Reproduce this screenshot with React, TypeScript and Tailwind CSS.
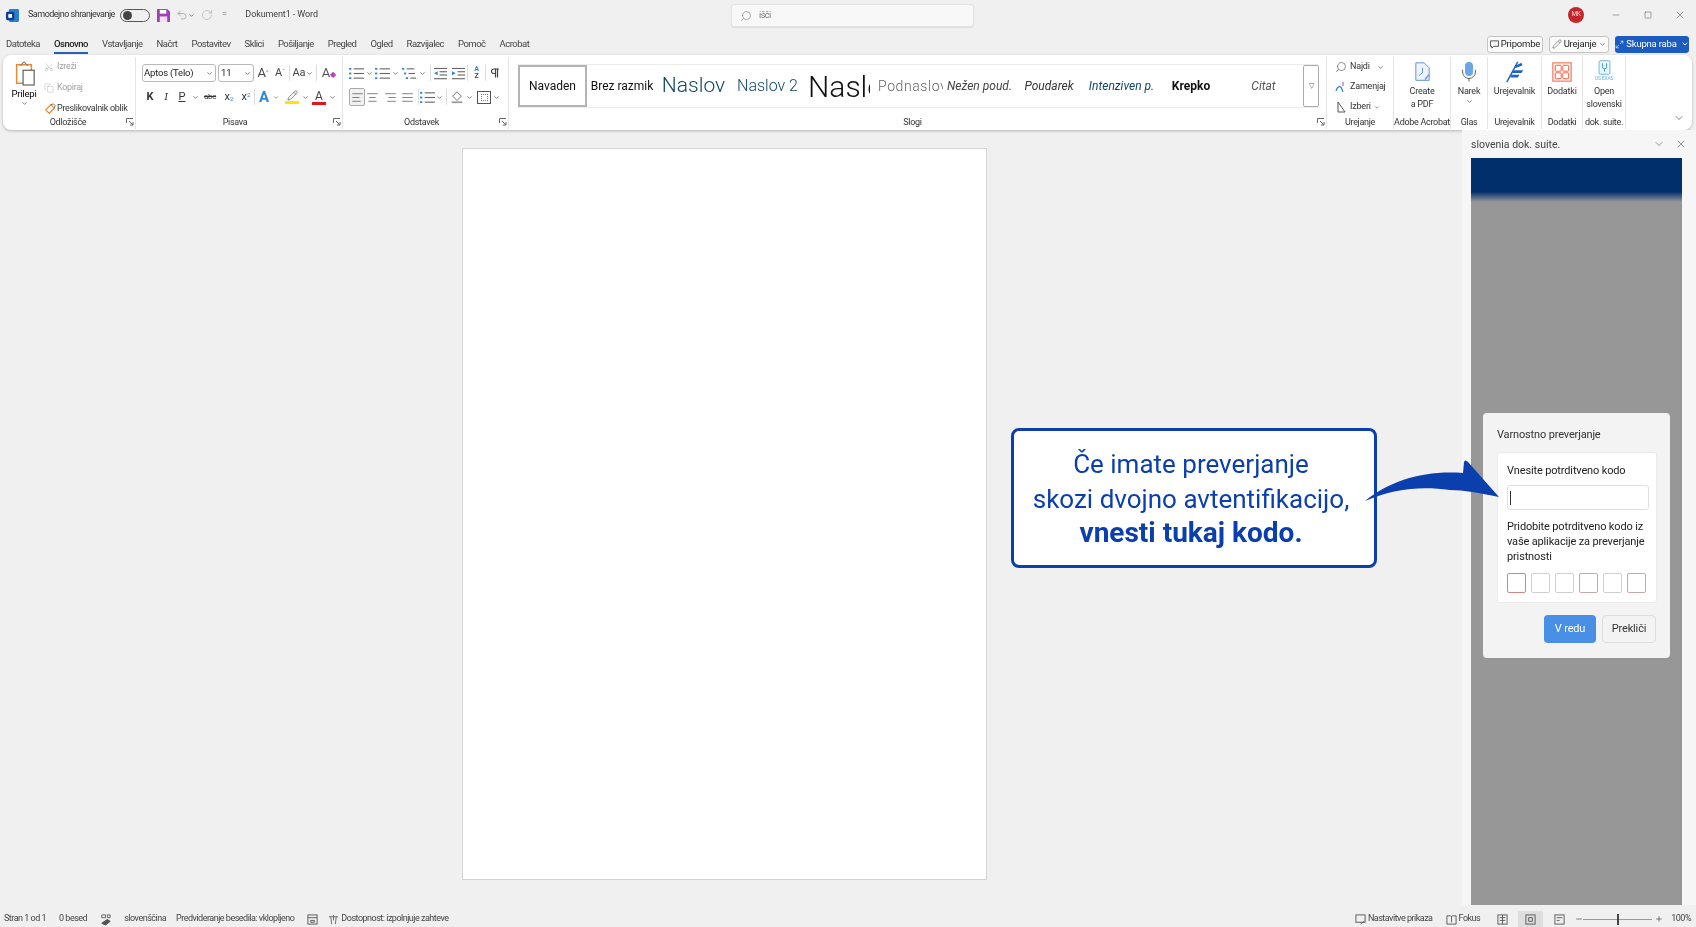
import type { ReactNode } from "react"
import {
  AlignCenter, AlignJustify, AlignLeft, AlignRight, ChevronDown, Copy, Maximize2, Mic, Minus, Pencil, Pilcrow,
  Plus, RotateCw, Scissors, Search, Square, Undo2, X,
} from "lucide-react"

const Chev = ({ w = 10 }: { w?: number }) => (
  <span className="flex shrink-0 items-center justify-center" style={{ width: w }}>
    <ChevronDown className="h-[7px] w-[7px] text-[#555]" strokeWidth={2.5} />
  </span>
)

const Launcher = () => (
  <svg viewBox="0 0 8 8" className="absolute bottom-[3px] right-[1px] h-2 w-2 text-[#666]" fill="none" stroke="currentColor">
    <path d="M.5 5V.5H7M3 3l4 4M7 4v3H4" />
  </svg>
)

const Sep = ({ className = "" }: { className?: string }) => <div className={`w-px h-4 shrink-0 bg-[#dcdcdc] ${className}`} />

function Group({ w, label, launcher, labelClass = "", children }: { w: number; label: string; launcher?: boolean; labelClass?: string; children: ReactNode }) {
  return (
    <div className="relative h-full shrink-0 border-r border-[#e4e4e4] flex flex-col" style={{ width: w }}>
      <div className="h-[59px] overflow-hidden">{children}</div>
      <div className={`text-[9px] tracking-[-0.3px] whitespace-nowrap leading-[13px] text-center text-[#333] ${labelClass}`}>{label}</div>
      {launcher && <Launcher />}
    </div>
  )
}

const ListIcon = ({ lines = 3, indent = false }: { lines?: number; indent?: boolean }) => (
  <svg viewBox="0 0 16 14" className="h-[13px] w-[15px] shrink-0">
    {[...Array(lines)].map((_, i) => (
      <g key={i}>
        <rect x={indent ? i * 2 : 0} y={1 + i * 5} width="2.4" height="2" fill="#2f86d6" />
        <rect x={(indent ? i * 2 : 0) + 5} y={1.4 + i * 5} width={indent ? 8 - i : 11} height="1.2" fill="#666" />
      </g>
    ))}
  </svg>
)

const IndentIcon = ({ flip = false }: { flip?: boolean }) => (
  <svg viewBox="0 0 16 14" className="h-[13px] w-[15px]">
    <rect x="1" y="1" width="14" height="1.2" fill="#666" />
    <rect x="7" y="4.5" width="8" height="1.2" fill="#666" />
    <rect x="7" y="8" width="8" height="1.2" fill="#666" />
    <rect x="1" y="12" width="14" height="1.2" fill="#666" />
    <path d={flip ? "M5 4.5v4.5L1 6.8z" : "M1 4.5v4.5l4-2.2z"} fill="#2f86d6" />
  </svg>
)

const Swatch = ({ color, children, className = "" }: { color: string; children: ReactNode; className?: string }) => (
  <span className={`flex flex-col items-center w-[16px] shrink-0 ${className}`}>
    {children}
    <span className="h-[3px] w-[14px]" style={{ background: color }} />
  </span>
)

function ClipboardGroup() {
  return (
    <div className="flex h-full">
      <div className="w-[38px] ml-[2px] flex flex-col items-center pt-[3px]">
        <svg viewBox="0 0 26 28" className="h-[26px] w-[24px]" fill="none">
          <path d="M5 5h16v20H5z" stroke="#e98b2a" strokeWidth="1.6" />
          <path d="M9 6l4-4 4 4" stroke="#777" strokeWidth="1.2" />
          <rect x="12" y="11" width="12" height="16" fill="#fff" stroke="#555" strokeWidth="1.2" />
        </svg>
        <div className="text-[9.5px] tracking-[-0.2px] leading-[12px] mt-[2px]">Prilepi</div>
        <Chev />
      </div>
      <div className="ml-[1px] pt-[1px] flex flex-col gap-[4px] text-[9px] tracking-[-0.3px] leading-[17px] whitespace-nowrap">
        <div className="flex items-center gap-[3px] text-[#a2a2a2]"><Scissors className="h-[10px] w-[10px] -rotate-90" strokeWidth={1} />Izreži</div>
        <div className="flex items-center gap-[3px] text-[#a2a2a2]"><Copy className="h-[10px] w-[10px]" strokeWidth={1} />Kopiraj</div>
        <div className="flex items-center gap-[1px] text-[#333]">
          <svg viewBox="0 0 14 14" className="h-[12px] w-[12px]" fill="none"><path d="M2 8l6-6 4 4-6 6z" stroke="#e98b2a" strokeWidth="1.4" /><path d="M8 2l3-1 2 2-1 3" stroke="#666" /></svg>
          Preslikovalnik oblik
        </div>
      </div>
    </div>
  )
}

function FontGroup() {
  return (
    <div className="pl-[6px] pt-[7px]">
      <div className="flex items-center h-[18px]">
        <div className="flex shrink-0 items-center justify-between w-[74px] h-[18px] border border-[#b9b9b9] rounded-[3px] pl-[1px] pr-[1px] text-[9.5px] tracking-[-0.2px] text-[#222]">Aptos (Telo)<Chev /></div>
        <div className="flex shrink-0 items-center justify-between ml-[2px] w-[36px] h-[18px] border border-[#b9b9b9] rounded-[3px] pl-[2px] pr-[1px] text-[9.5px] text-[#222]">11<Chev /></div>
        <span className="shrink-0 w-[18px] text-[13px] text-center text-[#444]">A<sup className="text-[6px] text-[#2f86d6]">^</sup></span>
        <span className="shrink-0 w-[16px] text-[11px] text-center text-[#444]">A<sup className="text-[6px] text-[#2f86d6]">ˇ</sup></span>
        <Sep className="mx-[1px]" />
        <span className="flex shrink-0 items-center justify-center w-[24px] text-[11px] text-[#444]">Aa<Chev w={8} /></span>
        <Sep className="mx-[1px]" />
        <span className="shrink-0 w-[22px] text-[13px] text-center text-[#555]">A<span className="text-[#c040c0] text-[8px]">◆</span></span>
      </div>
      <div className="flex items-center h-[18px] mt-[6px] text-[#333] text-[11px]">
        <span className="shrink-0 w-[16px] text-center font-bold">K</span>
        <span className="shrink-0 w-[16px] text-center italic font-serif">I</span>
        <span className="shrink-0 w-[16px] text-center underline">P</span>
        <Chev />
        <span className="shrink-0 w-[20px] text-center text-[8px] tracking-[-0.3px] line-through">abc</span>
        <span className="shrink-0 w-[18px] text-center">x<sub className="text-[6px] text-[#2f86d6]">2</sub></span>
        <span className="shrink-0 w-[16px] text-center">x<sup className="text-[6px] text-[#2f86d6]">2</sup></span>
        <Sep />
        <span className="shrink-0 w-[18px] text-center text-[15px] font-bold text-[#2f86d6]">A</span>
        <Chev w={6} />
        <Swatch color="#ffe600" className="ml-[5px]"><Pencil className="h-[11px] w-[11px] text-[#555]" strokeWidth={1.5} /></Swatch>
        <Chev />
        <Swatch color="#e8141c" className="ml-[1px]"><span className="text-[12px] leading-[12px] text-[#444]">A</span></Swatch>
        <Chev />
      </div>
    </div>
  )
}

function ParagraphGroup() {
  const align = "h-[13px] w-[15px] shrink-0 text-[#666]"
  return (
    <div className="pl-[6px] pt-[7px]">
      <div className="flex items-center h-[18px]">
        <ListIcon /><Chev />
        <span className="w-[1px] shrink-0" />
        <ListIcon /><Chev />
        <span className="w-[2px] shrink-0" />
        <ListIcon indent /><Chev />
        <Sep className="ml-[3px]" />
        <span className="shrink-0 w-[18px] flex justify-center"><IndentIcon flip /></span>
        <span className="shrink-0 w-[18px] flex justify-center"><IndentIcon /></span>
        <Sep />
        <span className="shrink-0 w-[17px] flex flex-col items-center text-[7px] leading-[7px] font-bold text-[#2f86d6]">A<span className="text-[#444]">Z</span></span>
        <Sep />
        <Pilcrow className="h-3 w-[18px] shrink-0 text-[#444]" strokeWidth={2.4} />
      </div>
      <div className="flex items-center h-[18px] mt-[6px]">
        <span className="flex shrink-0 items-center justify-center w-[16px] h-[18px] border border-[#aaa] rounded-[2px] bg-[#f1f1f1]"><AlignLeft className={align} strokeWidth={1.5} /></span>
        <AlignCenter className={align} strokeWidth={1.5} />
        <AlignRight className={`${align} ml-[3px]`} strokeWidth={1.5} />
        <AlignJustify className={`${align} ml-[2px]`} strokeWidth={1.5} />
        <Sep className="ml-[3px]" />
        <span className="ml-[1px]"><ListIcon /></span><Chev w={8} />
        <Sep className="ml-[3px]" />
        <svg viewBox="0 0 16 16" className="ml-[3px] h-[14px] w-[14px] shrink-0" fill="none"><path d="M8 2l5 5-5 5-5-5z" stroke="#666" /><path d="M2 14h12" stroke="#999" strokeWidth="2" /></svg>
        <Chev />
        <span className="ml-[3px] flex shrink-0 h-[13px] w-[14px] items-center justify-center border border-[#555] text-[#999]"><span className="h-[7px] w-[7px] border border-dotted border-[#777]" /></span>
        <Chev />
      </div>
    </div>
  )
}

function StylesGroup() {
  const cell = "shrink-0 flex items-center overflow-hidden whitespace-nowrap h-full"
  return (
    <div className="pl-[9px] pt-[7px] h-full">
      <div className="flex h-[44px] w-[801px] border-y border-[#ececec]">
        <div className={`${cell} w-[69px] justify-center border-2 border-[#b4b4b4] text-[12px] text-[#111]`}>Navaden</div>
        <div className={`${cell} w-[70px] justify-center text-[12px] text-[#111]`}>Brez razmik</div>
        <div className={`${cell} w-[73px] justify-center text-[21px] font-light text-[#0f4761]`}>Naslov</div>
        <div className={`${cell} w-[75px] justify-center text-[16px] font-light text-[#0f4761]`}>Naslov 2</div>
        <div className={`${cell} w-[65px] pl-[3px] text-[30px] font-light text-[#111]`}>Naslov</div>
        <div className={`${cell} w-[73px] pl-[8px] pr-[7px] text-[14px] tracking-[0.6px] font-light text-[#666]`}>Podnaslov</div>
        <div className={`${cell} w-[73px] justify-center text-[12px] italic text-[#444]`}>Nežen poud.</div>
        <div className={`${cell} w-[66px] justify-center text-[12px] italic text-[#333]`}>Poudarek</div>
        <div className={`${cell} w-[79px] justify-center text-[12px] italic text-[#0f4761]`}>Intenziven p.</div>
        <div className={`${cell} w-[60px] justify-center text-[12px] font-bold text-[#111]`}>Krepko</div>
        <div className={`${cell} w-[82px] justify-center pl-[3px] text-[12px] italic text-[#555]`}>Citat</div>
        <div className={`${cell} w-[16px] justify-center border border-[#aaa] rounded-[2px] text-[#555] text-[7px]`}>▽</div>
      </div>
    </div>
  )
}

function EditGroup() {
  const row = "flex items-center gap-[3px] h-[18px] text-[9px] tracking-[-0.2px] text-[#333]"
  return (
    <div className="pl-[8px] pt-[1px] flex flex-col gap-[2px]">
      <div className={row}><Search className="h-3 w-3 -scale-x-100 text-[#555]" strokeWidth={1.3} />Najdi<Chev w={16} /></div>
      <div className={row}>
        <svg viewBox="0 0 12 12" className="h-3 w-3" fill="none"><path d="M8 1v4" stroke="#b03ad0" /><path d="M1 10c1-4 3-5 5-4l2 5" stroke="#2f86d6" strokeWidth="1.3" /></svg>
        Zamenjaj
      </div>
      <div className={row}>
        <svg viewBox="0 0 12 12" className="h-3 w-3" fill="none"><path d="M3 1l7 10H3z" stroke="#555" /></svg>
        Izberi<Chev w={6} />
      </div>
    </div>
  )
}

const BigBtn = ({ icon, children }: { icon: ReactNode; children: ReactNode }) => (
  <div className="flex flex-col items-center pt-[4px] text-[9px] tracking-[-0.2px] whitespace-nowrap leading-[13px] text-[#333] text-center">
    <div className="h-[22px] flex items-center justify-center mb-[2px]">{icon}</div>
    {children}
  </div>
)

function Ribbon() {
  return (
    <div className="mx-[3px] h-[75px] w-[1689px] shrink-0 bg-white rounded-lg shadow-[0_1px_3px_rgba(0,0,0,0.25)] flex relative pt-[2px] pb-[1px]">
      <Group w={133} label="Odložišče" launcher labelClass="pr-[2px]"><ClipboardGroup /></Group>
      <Group w={207} label="Pisava" launcher labelClass="pr-[8px]"><FontGroup /></Group>
      <Group w={166} label="Odstavek" launcher labelClass="pr-[8px]"><ParagraphGroup /></Group>
      <Group w={818} label="Slogi" launcher labelClass="pr-[10px]"><StylesGroup /></Group>
      <Group w={67} label="Urejanje"><EditGroup /></Group>
      <Group w={57} label="Adobe Acrobat">
        <BigBtn icon={
          <svg viewBox="0 0 20 24" className="h-[20px] w-[17px]" fill="none" stroke="#5a8ad8" strokeWidth="1.1"><path d="M2 1h10l6 6v15H2z" fill="#eef4fd" /><path d="M10 7v6l-4 3" /><path d="M13 21l5-6" stroke="#7c9fdd" strokeWidth="2.2" /></svg>
        }>Create<br />a PDF</BigBtn>
      </Group>
      <Group w={37} label="Glas">
        <BigBtn icon={<div className="relative flex justify-center"><Mic className="h-[22px] w-[22px] text-[#555]" strokeWidth={1} /><span className="absolute top-[1px] h-[14px] w-[8px] rounded-full bg-[#6aa6e8]" /></div>}>Narek<Chev /></BigBtn>
      </Group>
      <Group w={54} label="Urejevalnik">
        <BigBtn icon={
          <svg viewBox="0 0 24 24" className="h-[22px] w-[22px]" fill="none"><path d="M15 1L3 23" stroke="#1f62c8" strokeWidth="1.6" /><path d="M13 5l6-3 1 3-8 3zM10 10h11l-2 3H9zM8 15h9l-2 3H7z" fill="#1f62c8" /></svg>
        }>Urejevalnik</BigBtn>
      </Group>
      <Group w={41} label="Dodatki">
        <BigBtn icon={
          <svg viewBox="0 0 24 24" className="h-[22px] w-[20px]" fill="none" stroke="#ef6a50" strokeWidth="1.2"><rect x="1" y="1" width="22" height="22" fill="#fdece7" /><rect x="4" y="4" width="7" height="7" rx="1" fill="#fff" /><rect x="13" y="4" width="7" height="7" rx="1" fill="#fff" /><rect x="4" y="13" width="7" height="7" rx="1" fill="#fff" /><rect x="13" y="13" width="7" height="7" rx="1" fill="#fff" /></svg>
        }>Dodatki</BigBtn>
      </Group>
      <Group w={43} label="dok. suite.">
        <div className="flex flex-col items-center pt-[3px] text-[9px] tracking-[-0.2px] leading-[13px] text-[#333]">
          <svg viewBox="0 0 18 22" className="h-[15px] w-[13px]" fill="none" stroke="#3f9bd6"><rect x="1" y="1" width="16" height="20" rx="2" fill="#eaf5fc" /><path d="M6 5v5a3 3 0 006 0V5M9 13v4" strokeWidth="1.4" /></svg>
          <div className="text-[5px] leading-[7px] text-[#6ab2e4] mb-[3px]">OS EXAS</div>
          <div>Open</div>
          <div>slovenski</div>
        </div>
      </Group>
      <ChevronDown className="absolute right-[7px] bottom-[6px] h-3 w-3 text-[#555]" strokeWidth={1.5} />
    </div>
  )
}

function TitleBar() {
  return (
    <div className="h-[30px] shrink-0 flex items-center relative text-[9px] tracking-[-0.5px] text-[#333]">
      <svg viewBox="0 0 14 14" className="ml-[6px] h-[13px] w-[13px]"><rect x="3" y="0" width="11" height="14" rx="1.5" fill="#2b7cd3" /><rect x="0" y="3" width="9" height="9" rx="1.5" fill="#103f91" /><rect x="2.5" y="5.5" width="4" height="4" fill="#fff" /></svg>
      <span className="ml-[9px]">Samodejno shranjevanje</span>
      <span className="ml-[5px] flex items-center h-[13px] w-[30px] rounded-full border border-[#555] pl-[2px]"><span className="h-[9px] w-[9px] rounded-full bg-[#444]" /></span>
      <svg viewBox="0 0 14 14" className="ml-[7px] h-[13px] w-[13px]"><path d="M0 0h11l3 3v11H0z" fill="#a23fb5" /><rect x="3" y="1" width="7" height="4" fill="#fff" /><rect x="3" y="8" width="8" height="6" fill="#f3dff7" /></svg>
      <Undo2 className="ml-[6px] h-3 w-3 text-[#888]" strokeWidth={1.2} />
      <Chev w={8} />
      <RotateCw className="ml-[5px] h-3 w-3 text-[#aaa]" strokeWidth={1.2} />
      <span className="ml-[9px] text-[#666]">=</span>
      <span className="ml-[19px] text-[#444] tracking-[-0.1px]">Dokument1 - Word</span>

      <div className="absolute left-[731px] top-[4px] h-[23px] w-[243px] bg-[#f8f8f8] border border-[#e2e2e2] rounded-[3px] shadow-[0_1px_1px_rgba(0,0,0,0.08)] flex items-center pl-[8px] gap-[7px] text-[#777]">
        <Search className="h-3 w-3 -scale-x-100" strokeWidth={1.2} />išči
      </div>

      <div className="ml-auto flex items-center">
        <span className="h-[16px] w-[16px] rounded-full bg-[#c4262e] text-[6.5px] text-white/80 flex items-center justify-center">MK</span>
        <span className="ml-[16px] w-[32px] flex justify-center"><Minus className="h-2.5 w-2.5 text-[#555]" strokeWidth={1.2} /></span>
        <span className="w-[32px] flex justify-center"><Square className="h-2 w-2 text-[#555]" strokeWidth={1.5} /></span>
        <span className="w-[32px] flex justify-center"><X className="h-3 w-3 text-[#555]" strokeWidth={1.1} /></span>
      </div>
    </div>
  )
}

function TabsRow() {
  const tabs = ["Vstavljanje", "Načrt", "Postavitev", "Sklici", "Pošiljanje", "Pregled", "Ogled", "Razvijalec", "Pomoč", "Acrobat"]
  return (
    <div className="h-[25px] shrink-0 flex items-center pt-[3px] pl-[6px] pr-[7px] text-[9.5px] tracking-[-0.5px] text-[#444] whitespace-nowrap">
      <span>Datoteka</span>
      <span className="relative ml-[14px] text-[#222] font-medium">
        Osnovno
        <span className="absolute left-0 right-0 -bottom-[3px] h-[2px] bg-[#2a5fb8]" />
      </span>
      {tabs.map((t) => <span key={t} className="ml-[14px]">{t}</span>)}
      <div className="ml-auto flex items-center gap-[6px] tracking-[-0.2px]">
        <span className="h-[17px] w-[56px] flex items-center justify-center gap-[2px] bg-[#fafafa] border border-[#c4c4c4] rounded-[3px] text-[#222]">
          <svg viewBox="0 0 10 10" className="h-[9px] w-[9px]" fill="none" stroke="#444"><path d="M.5 1h9v6H4L2 9V7H.5z" /></svg>Pripombe
        </span>
        <span className="h-[17px] w-[60px] flex items-center justify-center gap-[2px] bg-[#fafafa] border border-[#c4c4c4] rounded-[3px] text-[#222]">
          <Pencil className="h-[10px] w-[10px]" strokeWidth={1} />Urejanje<Chev w={8} />
        </span>
        <span className="h-[17px] w-[74px] flex items-center justify-center gap-[2px] bg-[#1a5cc0] rounded-[3px] text-white">
          <Maximize2 className="h-[9px] w-[9px]" strokeWidth={1.5} />Skupna raba<ChevronDown className="ml-[2px] h-2 w-2" strokeWidth={3} />
        </span>
      </div>
    </div>
  )
}

function Dialog() {
  const codes = ["border-[#c98a86]", "border-[#cfcfcf]", "border-[#cfcfcf]", "border-[#c9a8a6]", "border-[#cfcfcf]", "border-[#c9a8a6]"]
  return (
    <div className="mt-[211px] ml-[12px] w-[187px] h-[245px] bg-[#f3f3f3] rounded-[4px] px-[14px] pt-[15px] text-[#333] text-[11px] tracking-[-0.15px]">
      <div className="leading-[14px]">Varnostno preverjanje</div>
      <div className="mt-[10px] h-[151px] w-[160px] bg-white border border-[#ebebeb] rounded-[3px] px-[9px] pt-[10px]">
        <div className="leading-[15px] text-[#222]">Vnesite potrditveno kodo</div>
        <div className="mt-[7px] h-[25px] w-[142px] border border-[#dfdfdf] rounded-[3px] flex items-center pl-[2px]"><span className="h-[14px] w-px bg-[#333]" /></div>
        <div className="mt-[9px] w-[150px] leading-[15px] text-[#222]">Pridobite potrditveno kodo iz vaše aplikacije za preverjanje pristnosti</div>
        <div className="mt-[9px] flex gap-[5px]">
          {codes.map((c, i) => <div key={i} className={`h-[20px] w-[19px] border ${c} rounded-[2px]`} />)}
        </div>
      </div>
      <div className="mt-[12px] flex justify-end gap-[6px]">
        <div className="h-[28px] w-[52px] rounded-[4px] bg-[#4a8fe6] text-white flex items-center justify-center">V redu</div>
        <div className="h-[28px] w-[54px] rounded-[4px] border border-[#dedede] flex items-center justify-center">Prekliči</div>
      </div>
    </div>
  )
}

function TaskPane() {
  return (
    <div className="w-[234px] shrink-0 bg-[#f6f6f6] flex flex-col">
      <div className="h-[28px] shrink-0 flex items-center pl-[9px] pr-[9px] text-[10.5px] text-[#444]">
        <span className="pt-[2px]">slovenia dok. suite.</span>
        <ChevronDown className="ml-auto h-3 w-3 text-[#555]" strokeWidth={1.2} />
        <X className="ml-[10px] h-3 w-3 text-[#555]" strokeWidth={1.2} />
      </div>
      <div className="ml-[9px] mr-[14px] flex-1 bg-[#979797]">
        <div className="h-[44px] bg-gradient-to-b from-[#002f6c] from-[77%] to-[#979797]" />
        <Dialog />
      </div>
    </div>
  )
}

function Callout() {
  return (
    <>
      <div className="absolute left-[1011px] top-[298px] h-[140px] w-[366px] bg-white border-[3px] border-[#0b3fae] rounded-[8px] flex flex-col items-center justify-center pr-[6px] text-[26px] leading-[35px] text-[#0b3fae]">
        <div>Če imate preverjanje</div>
        <div>skozi dvojno avtentifikacijo,</div>
        <div className="font-bold text-[28px] -mt-[2px]">vnesti tukaj kodo.</div>
      </div>
      <svg viewBox="0 0 140 50" className="absolute left-[1364px] top-[329px] h-[50px] w-[140px]">
        <path d="M1 42C25 22 60 11 99 14L100 3Q101 0 104 3L135 38C115 34 100 31 86 31C55 27 30 30 1 42Z" fill="#0b3fae" />
      </svg>
    </>
  )
}

function StatusBar() {
  return (
    <div className="h-[22px] shrink-0 flex items-center pt-[6px] text-[9px] tracking-[-0.5px] text-[#444] pl-[4px] pr-[5px] whitespace-nowrap">
      <span>Stran 1 od 1</span>
      <span className="ml-[13px]">0 besed</span>
      <svg viewBox="0 0 14 14" className="ml-[12px] h-[13px] w-[13px]" fill="none" stroke="#444"><path d="M3 2h4v3H3zM9 2h3v3H9z" strokeWidth=".8" /><path d="M3 11l6-4 3 2-5 4z" fill="#555" /></svg>
      <span className="ml-[12px]">slovenščina</span>
      <span className="ml-[10px]">Predvideranje besedila: vklopljeno</span>
      <svg viewBox="0 0 12 12" className="ml-[13px] h-[11px] w-[11px]" fill="none" stroke="#555"><rect x="1" y="1" width="10" height="10" /><path d="M1 4h10M4 7h4v2H4z" /></svg>
      <svg viewBox="0 0 12 12" className="ml-[10px] h-[11px] w-[11px]" fill="none" stroke="#666"><path d="M1 3h10M3 3l1 8M9 3l-1 8M6 1v6" /></svg>
      <span className="ml-[2px]">Dostopnost: izpolnjuje zahteve</span>
      <div className="ml-auto flex items-center">
        <svg viewBox="0 0 12 12" className="h-[11px] w-[11px]" fill="none" stroke="#555"><rect x="1" y="1" width="10" height="8" /><path d="M6 11l4-3" /></svg>
        <span className="ml-[2px]">Nastavitve prikaza</span>
        <svg viewBox="0 0 12 12" className="ml-[13px] h-[11px] w-[11px]" fill="none" stroke="#555"><path d="M1 2h4l1 1 1-1h4v9H1zM6 3v6" /></svg>
        <span className="ml-[2px]">Fokus</span>
        <svg viewBox="0 0 12 12" className="ml-[17px] h-[11px] w-[11px]" fill="none" stroke="#555"><rect x="1" y="1" width="10" height="10" /><path d="M6 1v10M3 4h6M3 7h6" /></svg>
        <span className="ml-[10px] h-[16px] w-[25px] bg-[#dedede] flex items-center justify-center">
          <svg viewBox="0 0 12 12" className="h-[11px] w-[11px]" fill="none" stroke="#555"><rect x="1" y="1" width="10" height="10" /><path d="M4 4h4v4H4z" /></svg>
        </span>
        <svg viewBox="0 0 12 12" className="ml-[11px] h-[11px] w-[11px]" fill="none" stroke="#555"><rect x="1" y="1" width="10" height="10" /><path d="M3 4h6M3 7h3" /></svg>
        <Minus className="ml-[10px] h-2 w-2" strokeWidth={2} />
        <span className="relative h-px w-[69px] bg-[#999]"><span className="absolute left-[34px] -top-[5px] h-[11px] w-[2px] bg-[#444]" /></span>
        <Plus className="ml-[3px] h-2 w-2" strokeWidth={2} />
        <span className="ml-[8px]">100%</span>
      </div>
    </div>
  )
}

export default function App() {
  return (
    <div className="w-[1696px] h-[927px] overflow-hidden flex flex-col bg-[#f0f0f0] font-['Roboto',sans-serif] blur-[0.4px]">
      <TitleBar />
      <TabsRow />
      <Ribbon />
      <div className="relative flex-1 flex min-h-0">
        <div className="flex-1 flex justify-center pr-[14px] pt-[18px]">
          <div className="h-[732px] w-[525px] bg-white border border-[#d4d4d4]" />
        </div>
        <TaskPane />
        <Callout />
      </div>
      <StatusBar />
    </div>
  )
}
